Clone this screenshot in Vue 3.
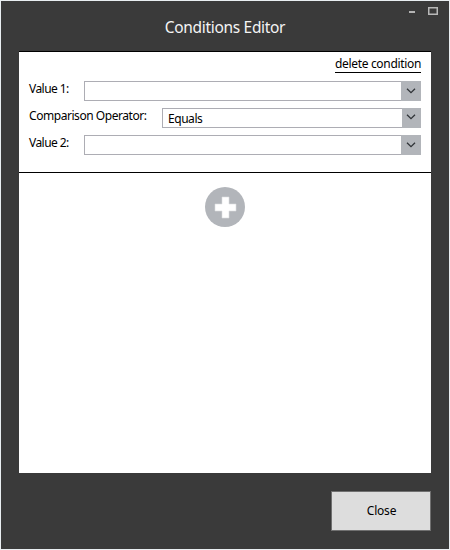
<script setup>
import { ref } from 'vue'

const rows = ref([
  { id: 'value1', label: 'Value 1:', value: '' },
  { id: 'operator', label: 'Comparison Operator:', value: 'Equals' },
  { id: 'value2', label: 'Value 2:', value: '' },
])
</script>

<template>
  <div class="window">
    <header class="titlebar">
      <h1 class="title">Conditions Editor</h1>
      <div class="controls">
        <svg width="6" height="12" viewBox="0 0 6 12"><rect y="7" width="6" height="2" fill="#b4b4b4" /></svg>
        <svg width="10" height="12" viewBox="0 0 10 12"><rect x=".75" y="3.75" width="8.5" height="6.5" fill="none" stroke="#b8b8b8" stroke-width="1.5" /></svg>
      </div>
    </header>
    <main class="panel">
      <section class="condition">
        <div class="actions"><a class="delete">delete condition</a></div>
        <div v-for="row in rows" :key="row.id" class="row" :class="row.id">
          <span class="label">{{ row.label }}</span>
          <div class="combo">
            <span class="value">{{ row.value }}</span>
            <span class="arrow">
              <svg width="10" height="6" viewBox="0 0 10 6"><path d="M1 .8 L5 4.6 L9 .8" fill="none" stroke="#303438" stroke-width="1.3" /></svg>
            </span>
          </div>
        </div>
      </section>
      <div class="add">
        <svg width="40" height="40" viewBox="0 0 40 40">
          <circle cx="20" cy="20" r="20" fill="#b2b5ba" />
          <path d="M17 10h7v7h7v7h-7v7h-7v-7h-7v-7h7z" fill="#fff" stroke="#dcdee0" stroke-width=".6" />
        </svg>
      </div>
    </main>
    <footer class="footer"><button class="close">Close</button></footer>
  </div>
</template>

<style>
body { background: #e9eef1; }
</style>

<style scoped>
.window {
  box-sizing: border-box;
  width: 450px;
  height: 550px;
  border: 1px solid #e9eef1;
  background: #3a3a3a;
  font-family: "Noto Sans", "Open Sans", sans-serif;
  font-size: 12px;
  color: #000;
}
.titlebar { position: relative; height: 50px; }
.title {
  margin: 0;
  padding-top: 14px;
  font-size: 15.5px;
  line-height: 24px;
  font-weight: 400;
  letter-spacing: -0.32px;
  text-align: center;
  color: #f4f4f4;
}
.controls {
  position: absolute;
  top: 3px;
  right: 11px;
  display: flex;
  gap: 13px;
}
.controls svg, .add svg, .arrow svg { display: block; }
.panel {
  box-sizing: border-box;
  height: 422px;
  margin: 0 18px;
  border-top: 1px solid #000;
  background: #fff;
}
.condition {
  box-sizing: border-box;
  height: 121px;
  padding: 4px 10px 0;
  border-bottom: 1px solid #000;
}
.actions {
  display: flex;
  justify-content: flex-end;
  height: 25px;
}
.delete {
  height: 16px;
  line-height: 16px;
  border-bottom: 1px solid #000;
  white-space: nowrap;
  letter-spacing: -0.33px;
}
.row {
  display: flex;
  height: 20px;
  margin-bottom: 7px;
}
.label {
  width: 55px;
  line-height: 16px;
  white-space: nowrap;
  letter-spacing: -0.55px;
}
.operator .label {
  width: 133px;
  letter-spacing: -0.45px;
}
.combo {
  flex: 1;
  box-sizing: border-box;
  display: flex;
  border: 1px solid #adadb4;
  border-right: 0;
}
.value {
  flex: 1;
  padding-left: 5px;
  line-height: 20px;
  letter-spacing: -0.45px;
}
.arrow {
  box-sizing: border-box;
  display: flex;
  align-items: center;
  justify-content: center;
  width: 20px;
  margin: -1px 0;
  background: #b2b5ba;
}
.operator .arrow {
  width: 19px;
  padding: 0 1px 2px 0;
}
.add {
  display: flex;
  justify-content: center;
  padding-top: 14px;
}
.footer {
  display: flex;
  justify-content: flex-end;
  padding: 18px 18px 0;
}
.close {
  box-sizing: border-box;
  width: 100px;
  height: 40px;
  padding: 0 0 2px 1px;
  border: 1px solid #707070;
  background: #ddd;
  color: #000;
  font: inherit;
  letter-spacing: -0.2px;
}
</style>
